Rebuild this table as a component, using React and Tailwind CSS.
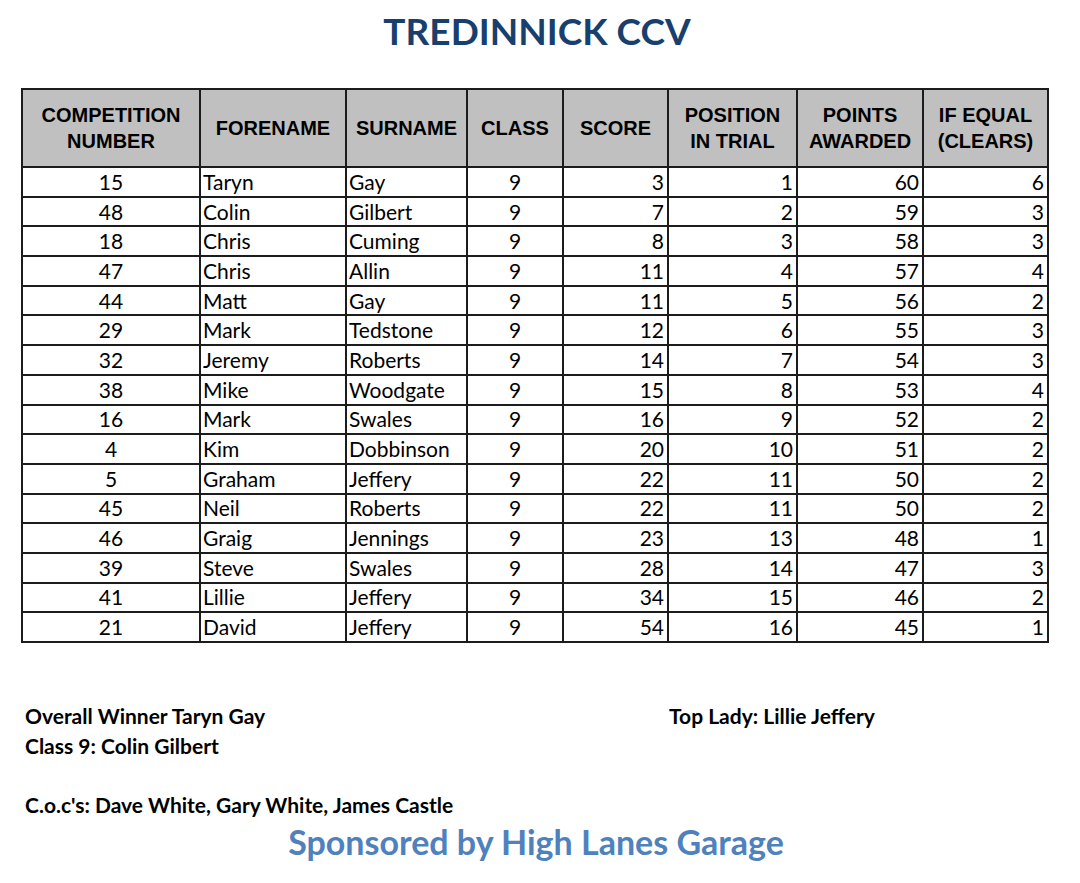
import React from "react";

const rows = [
  [15, "Taryn", "Gay", 9, 3, 1, 60, 6],
  [48, "Colin", "Gilbert", 9, 7, 2, 59, 3],
  [18, "Chris", "Cuming", 9, 8, 3, 58, 3],
  [47, "Chris", "Allin", 9, 11, 4, 57, 4],
  [44, "Matt", "Gay", 9, 11, 5, 56, 2],
  [29, "Mark", "Tedstone", 9, 12, 6, 55, 3],
  [32, "Jeremy", "Roberts", 9, 14, 7, 54, 3],
  [38, "Mike", "Woodgate", 9, 15, 8, 53, 4],
  [16, "Mark", "Swales", 9, 16, 9, 52, 2],
  [4, "Kim", "Dobbinson", 9, 20, 10, 51, 2],
  [5, "Graham", "Jeffery", 9, 22, 11, 50, 2],
  [45, "Neil", "Roberts", 9, 22, 11, 50, 2],
  [46, "Graig", "Jennings", 9, 23, 13, 48, 1],
  [39, "Steve", "Swales", 9, 28, 14, 47, 3],
  [41, "Lillie", "Jeffery", 9, 34, 15, 46, 2],
  [21, "David", "Jeffery", 9, 54, 16, 45, 1],
];

const headers = [
  ["COMPETITION", "NUMBER"],
  ["FORENAME"],
  ["SURNAME"],
  ["CLASS"],
  ["SCORE"],
  ["POSITION", "IN TRIAL"],
  ["POINTS", "AWARDED"],
  ["IF EQUAL", "(CLEARS)"],
];

const widths = [178, 146, 121, 96, 105, 129, 126, 125];

const App = () => {
  return (
    <div className="w-[1080px] h-[883px] bg-white text-black font-['Lato','Liberation_Sans',sans-serif]">
      <h1 className="pt-[9px] h-[88px] text-center text-[37px] leading-[44px] font-bold text-[#183f6d] pr-[6px]">
        TREDINNICK CCV
      </h1>

      <table className="ml-[21px] w-[1026px] border-collapse table-fixed">
        <colgroup>
          {widths.map((w, i) => (
            <col key={i} style={{ width: w }} />
          ))}
        </colgroup>
        <thead>
          <tr className="bg-[#c0c0c0] h-[78px]">
            {headers.map((h, i) => (
              <th
                key={i}
                className="border-2 border-[#1c1c1c] font-['Liberation_Sans',Arial,sans-serif] font-bold text-[20px] leading-[26px] text-center px-0 pb-[1px]"
              >
                {h.map((line, j) => (
                  <div key={j}>{line}</div>
                ))}
              </th>
            ))}
          </tr>
        </thead>
        <tbody>
          {rows.map((row, index) => (
            <tr key={index} className="h-[29.7px] text-[21px] leading-[22px]">
              <td className="border-2 border-[#1c1c1c] text-center p-0">{row[0]}</td>
              <td className="border-2 border-[#1c1c1c] text-left pl-[2px] p-0">{row[1]}</td>
              <td className="border-2 border-[#1c1c1c] text-left pl-[2px] p-0">{row[2]}</td>
              <td className="border-2 border-[#1c1c1c] text-center p-0">{row[3]}</td>
              <td className="border-2 border-[#1c1c1c] text-right pr-[3px] p-0">{row[4]}</td>
              <td className="border-2 border-[#1c1c1c] text-right pr-[3px] p-0">{row[5]}</td>
              <td className="border-2 border-[#1c1c1c] text-right pr-[3px] p-0">{row[6]}</td>
              <td className="border-2 border-[#1c1c1c] text-right pr-[3px] p-0">{row[7]}</td>
            </tr>
          ))}
        </tbody>
      </table>

      <div className="pl-[25px] pt-[58px] font-bold text-[21px] leading-[30px]">
        <div className="flex">
          <div className="w-[644px]">Overall Winner Taryn Gay</div>
          <div>Top Lady: Lillie Jeffery</div>
        </div>
        <div>Class 9: Colin Gilbert</div>
        <div className="mt-[29px]">C.o.c's: Dave White, Gary White, James Castle</div>
      </div>
      <div className="text-center font-bold text-[34px] leading-[40px] text-[#4f81bd] mt-[2px] pr-[8px]">
        Sponsored by High Lanes Garage
      </div>
    </div>
  );
};

export default App;
